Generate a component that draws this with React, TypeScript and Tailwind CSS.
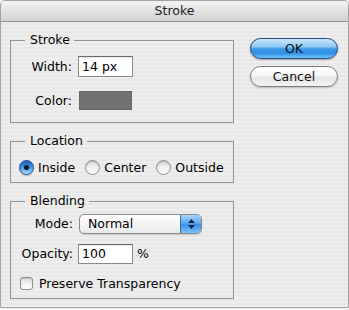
import React from "react";

const stripes =
  "bg-[repeating-linear-gradient(to_bottom,#eeeeee_0px,#eeeeee_2px,#e8e8e8_2px,#e8e8e8_4px)]";

function Radio({ checked }: { checked?: boolean }) {
  if (checked) {
    return (
      <span className="shrink-0 w-[15px] h-[15px] rounded-full border border-[#24508f] bg-[linear-gradient(to_bottom,#1c5fb8_0%,#3f8fe0_45%,#7cc4f6_80%,#b6e4fd_100%)] flex items-center justify-center shadow-[0_1px_1px_rgba(0,0,0,0.25)]">
        <span className="block w-[5px] h-[5px] rounded-full bg-[#0d1a2e]" />
      </span>
    );
  }
  return (
    <span className="block shrink-0 w-[15px] h-[15px] rounded-full border border-[#8c8c8c] bg-[linear-gradient(to_bottom,#d6d6d6_0%,#eeeeee_45%,#ffffff_100%)] shadow-[inset_0_1px_1px_rgba(0,0,0,0.15)]" />
  );
}

export default function App() {
  return (
    <div className="w-[349px] h-[310px] bg-[#f4f4f4] font-['DejaVu_Sans',sans-serif] text-[12.5px] text-black leading-[16px]">
      <div className={`w-[349px] h-[308px] flex flex-col rounded-t-[5px] border border-[#a3a3a3] overflow-hidden ${stripes}`}>
        <div className="h-[21px] shrink-0 border-b border-[#8e8e8e] bg-[linear-gradient(to_bottom,#f3f3f3_0%,#e2e2e2_50%,#d3d3d3_100%)] flex items-center justify-center text-[#1e1e1e] leading-[20px]">
          Stroke
        </div>
        <div className="flex">
          <div className="pl-[9px] pt-[10px] flex flex-col">
            {/* Stroke group */}
            <fieldset className="w-[224px] border border-[#939393] pb-[12px]">
              <legend className="ml-[14px] pl-[5px] pr-[4px] leading-[16px]">Stroke</legend>
              <div className="grid grid-cols-[61px_auto] gap-x-[6px] items-center mt-[8px]">
                <span className="text-right">Width:</span>
                <div className="w-[55px] h-[21px] bg-white border border-[#8a8a8a] border-t-[#6a6a6a] shadow-[inset_0_1px_0_rgba(0,0,0,0.08)] pl-[3px] flex items-center">
                  14 px
                </div>
              </div>
              <div className="grid grid-cols-[61px_auto] gap-x-[6px] items-center mt-[14px]">
                <span className="text-right">Color:</span>
                <div className="ml-[1px] w-[53px] h-[19px] bg-[#717173] border border-[#666668]" />
              </div>
            </fieldset>

            {/* Location group */}
            <fieldset className="w-[224px] border border-[#939393] mt-[10px] pb-[7px]">
              <legend className="ml-[14px] pl-[5px] pr-[4px] leading-[16px]">Location</legend>
              <div className="flex items-center h-[15px] mt-[11px] ml-[8px]">
                <Radio checked />
                <span className="ml-[4px]">Inside</span>
                <span className="ml-[10px] flex">
                  <Radio />
                </span>
                <span className="ml-[4px]">Center</span>
                <span className="ml-[10px] flex">
                  <Radio />
                </span>
                <span className="ml-[4px]">Outside</span>
              </div>
            </fieldset>

            {/* Blending group */}
            <fieldset className="w-[224px] border border-[#939393] mt-[10px] pb-[8px]">
              <legend className="ml-[14px] pl-[5px] pr-[4px] leading-[16px]">Blending</legend>
              <div className="grid grid-cols-[62px_auto] gap-x-[5px] items-center mt-[5px]">
                <span className="text-right">Mode:</span>
                <div className="ml-[1px] w-[123px] h-[20px] rounded-[5px] border border-[#8a8a8a] bg-[linear-gradient(to_bottom,#ffffff_0%,#f4f4f4_50%,#e9e9e9_100%)] shadow-[0_1px_1px_rgba(0,0,0,0.15)] flex overflow-hidden">
                  <span className="flex-1 pl-[8px] flex items-center">Normal</span>
                  <span className="w-[21px] h-full border-l border-[#3d6fb0] bg-[linear-gradient(to_bottom,#a9d6fa_0%,#5eaaf0_45%,#3a8fe6_55%,#7cc5fa_100%)] flex flex-col items-center justify-center gap-[2px]">
                    <svg width="7" height="4" viewBox="0 0 7 4">
                      <path d="M3.5 0 L7 4 L0 4 Z" fill="#102a4e" />
                    </svg>
                    <svg width="7" height="4" viewBox="0 0 7 4">
                      <path d="M0 0 L7 0 L3.5 4 Z" fill="#102a4e" />
                    </svg>
                  </span>
                </div>
              </div>
              <div className="grid grid-cols-[62px_auto] gap-x-[5px] items-center mt-[10px]">
                <span className="text-right">Opacity:</span>
                <div className="flex items-center">
                  <div className="w-[55px] h-[20px] bg-white border border-[#8a8a8a] border-t-[#6a6a6a] shadow-[inset_0_1px_0_rgba(0,0,0,0.08)] pl-[3px] flex items-center">
                    100
                  </div>
                  <span className="ml-[4px]">%</span>
                </div>
              </div>
              <div className="flex items-center h-[13px] mt-[13px] ml-[9px]">
                <span className="block shrink-0 w-[13px] h-[13px] rounded-[3px] border border-[#8b8b8b] bg-[linear-gradient(to_bottom,#dcdcdc_0%,#f2f2f2_50%,#ffffff_100%)] shadow-[inset_0_1px_1px_rgba(0,0,0,0.12)]" />
                <span className="ml-[6px]">Preserve Transparency</span>
              </div>
            </fieldset>
          </div>

          {/* Buttons */}
          <div className="ml-[16px] pt-[16px] flex flex-col gap-[7px]">
            <div className="w-[88px] h-[21px] rounded-full border border-[#24477c] bg-[linear-gradient(to_bottom,#cbe7fb_0%,#8fc9f5_40%,#3d9ae8_52%,#2f8fe4_75%,#6ec4fa_100%)] shadow-[0_1px_2px_rgba(0,0,0,0.3)] flex items-center justify-center text-[#101010]">
              OK
            </div>
            <div className="w-[88px] h-[21px] rounded-full border border-[#7c7c7c] bg-[linear-gradient(to_bottom,#ffffff_0%,#f6f6f6_45%,#e4e4e4_55%,#f4f4f4_100%)] shadow-[0_1px_2px_rgba(0,0,0,0.2)] flex items-center justify-center text-[#101010]">
              Cancel
            </div>
          </div>
        </div>
      </div>
    </div>
  );
}
